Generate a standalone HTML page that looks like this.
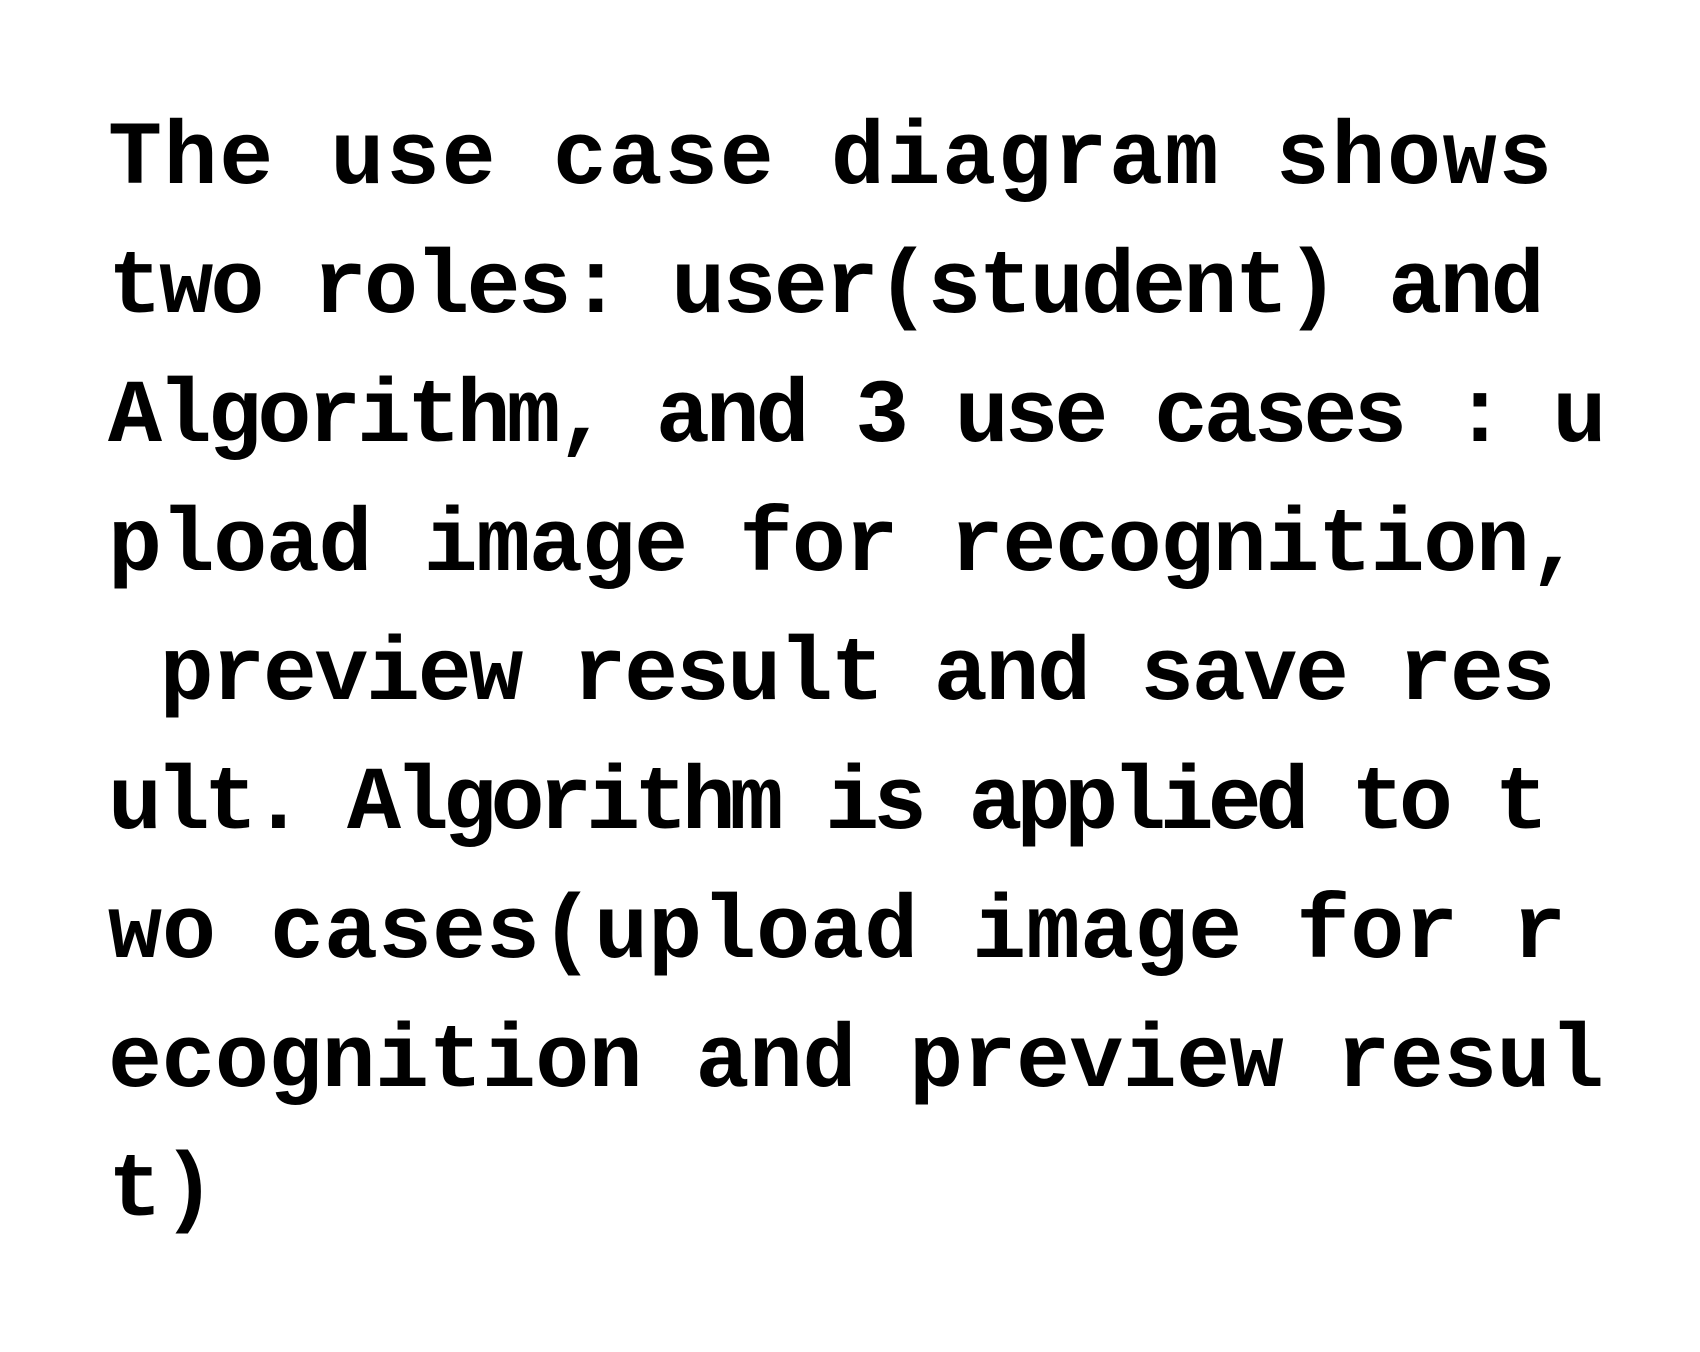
<!DOCTYPE html>
<html><head><meta charset="utf-8"><style>
html,body{margin:0;padding:0;background:#fff;width:1700px;height:1352px;overflow:hidden}
.t{position:absolute;left:108px;top:96px;font-family:"Liberation Mono",monospace;font-weight:bold;font-size:90px;line-height:129px;color:#000}
.t div{height:129px;white-space:pre}
</style></head><body>
<div class="t"><div style="letter-spacing:1.6px">The use case diagram shows</div><div style="letter-spacing:-2.8px">two roles: user(student) and</div><div style="letter-spacing:-4.2px">Algorithm, and 3 use cases : u</div><div style="letter-spacing:-1.4px">pload image for recognition,</div><div style="letter-spacing:-2.4px"> preview result and save res</div><div style="letter-spacing:-6.2px">ult. Algorithm is applied to t</div><div style="letter-spacing:0px">wo cases(upload image for r</div><div style="letter-spacing:-0.6px">ecognition and preview resul</div><div>t)</div></div>
</body></html>
